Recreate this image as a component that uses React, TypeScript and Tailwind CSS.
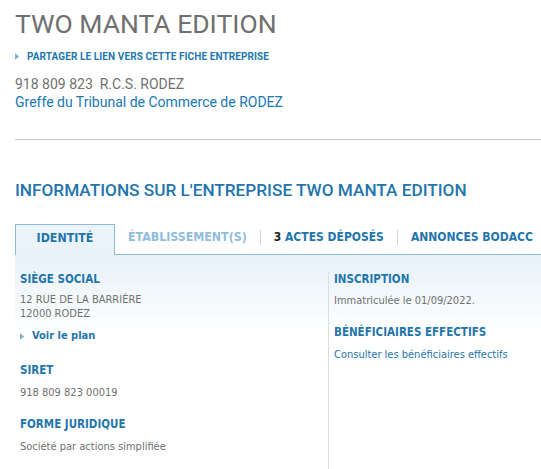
import React from "react";

const din = { fontFamily: '"Roboto", "Liberation Sans", sans-serif' };
const tah = { fontFamily: '"DejaVu Sans Condensed", "DejaVu Sans", sans-serif' };

function Arrow({ className = "" }: { className?: string }) {
  return (
    <svg viewBox="0 0 6 8" className={`h-[7px] w-[5px] shrink-0 ${className}`} aria-hidden="true">
      <path d="M0 0 L5 4 L0 8 Z" fill="#7aaed2" />
    </svg>
  );
}

function Tab({ label, first }: { label: React.ReactNode; first?: boolean }) {
  return (
    <div className="flex items-center">
      {!first && <span className="h-[15px] w-px bg-[#d2d2d2]" />}
      <span className="px-[13px]">{label}</span>
    </div>
  );
}

export default function App() {
  return (
    <div className="min-h-[469px] w-[541px] overflow-hidden bg-white" style={din}>
      {/* header */}
      <div className="pl-[15px] pt-[8px]">
        <h1 className="text-[26.5px] font-normal leading-[32px] text-[#707070]">
          TWO MANTA EDITION
        </h1>
        <div className="mt-[9px] flex items-center gap-[7px] text-[10px] font-bold tracking-[0.1px] text-[#2078b0]">
          <Arrow />
          <span>PARTAGER LE LIEN VERS CETTE FICHE ENTREPRISE</span>
        </div>
        <div className="mt-[11px] text-[14px] leading-[18px]">
          <p className="text-[#707070]">918 809 823&nbsp; R.C.S. RODEZ</p>
          <p className="text-[#2078b0]">Greffe du Tribunal de Commerce de RODEZ</p>
        </div>
      </div>

      <div className="ml-[15px] mt-[28px] h-px bg-[#c8c8c8]" />

      <h2 className="mt-[39px] pl-[15px] text-[17.2px] font-medium leading-[22px] text-[#1f75ac]">
        INFORMATIONS SUR L'ENTREPRISE TWO MANTA EDITION
      </h2>

      {/* tabs */}
      <div className="mt-[23px] flex items-end pl-[15px] text-[12px] font-bold" style={tah}>
        <div className="flex h-[31px] w-[100px] shrink-0 items-center justify-center border border-b-0 border-[#8dbcd8] bg-[#e9f3f9] pb-[4px] text-[12.3px] text-[#1f75ac]">
          IDENTITÉ
        </div>
        <div className="flex h-[31px] flex-1 items-center border-b border-[#8dbcd8] pb-[4px] whitespace-nowrap">
          <Tab first label={<span className="text-[12.3px] text-[#8fbddc]">ÉTABLISSEMENT(S)</span>} />
          <Tab
            label={
              <span className="text-[#1f75ac]">
                <span className="text-[#222]">3</span> ACTES DÉPOSÉS
              </span>
            }
          />
          <Tab label={<span className="text-[#1f75ac]">ANNONCES BODACC</span>} />
          <span className="h-[15px] w-px shrink-0 bg-[#d2d2d2]" />
        </div>
      </div>

      {/* content */}
      <div
        className="ml-[15px] grid grid-cols-[313px_1fr] bg-gradient-to-b from-[#e7f1f8] to-white to-[80px] pt-[17px] text-[11px] leading-[14px]"
        style={tah}
      >
        <div className="pl-[5px]">
          <h3 className="text-[11.5px] font-bold text-[#1f75ac]">SIÈGE SOCIAL</h3>
          <p className="mt-[7px] text-[#707070]">12 RUE DE LA BARRIÈRE</p>
          <p className="text-[#707070]">12000 RODEZ</p>
          <div className="mt-[8px] flex items-center gap-[7px] font-bold text-[#1f75ac]">
            <Arrow />
            <span>Voir le plan</span>
          </div>
          <h3 className="mt-[20px] text-[11.5px] font-bold text-[#1f75ac]">SIRET</h3>
          <p className="mt-[9px] text-[#707070]">918 809 823 00019</p>
          <h3 className="mt-[17px] text-[11.5px] font-bold text-[#1f75ac]">FORME JURIDIQUE</h3>
          <p className="mt-[9px] text-[#707070]">Société par actions simplifiée</p>
        </div>
        <div className="min-h-[210px] border-l border-[#d6dfe6] pl-[5px]">
          <h3 className="text-[11.5px] font-bold text-[#1f75ac]">INSCRIPTION</h3>
          <p className="mt-[8px] text-[#707070]">Immatriculée le 01/09/2022.</p>
          <h3 className="mt-[17px] text-[11.5px] font-bold text-[#1f75ac]">BÉNÉFICIAIRES EFFECTIFS</h3>
          <p className="mt-[9px] text-[#1f75ac]">Consulter les bénéficiaires effectifs</p>
        </div>
      </div>
    </div>
  );
}
